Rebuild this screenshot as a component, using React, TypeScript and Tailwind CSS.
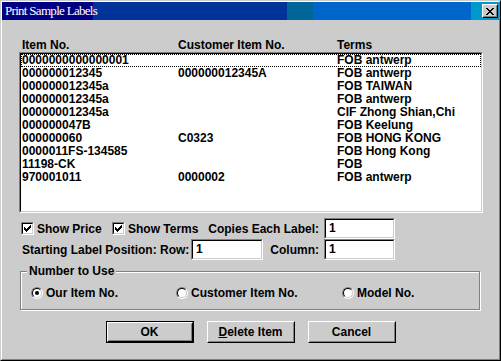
import React from "react";

const rows: [string, string, string][] = [
  ["0000000000000001", "", "FOB antwerp"],
  ["000000012345", "000000012345A", "FOB antwerp"],
  ["000000012345a", "", "FOB TAIWAN"],
  ["000000012345a", "", "FOB antwerp"],
  ["000000012345a", "", "CIF Zhong Shian,Chi"],
  ["000000047B", "", "FOB Keelung"],
  ["000000060", "C0323", "FOB HONG KONG"],
  ["0000011FS-134585", "", "FOB Hong Kong"],
  ["11198-CK", "", "FOB"],
  ["970001011", "0000002", "FOB antwerp"],
];

function PixelGlyph({ map, className }: { map: string[]; className?: string }) {
  const w = map[0].length;
  const h = map.length;
  const rects: React.ReactElement[] = [];
  map.forEach((row, y) =>
    row.split("").forEach((c, x) => {
      if (c === "X") rects.push(<rect key={`${x}-${y}`} x={x} y={y} width={1} height={1} />);
    })
  );
  return (
    <svg width={w} height={h} viewBox={`0 0 ${w} ${h}`} shapeRendering="crispEdges" className={className} fill="black">
      {rects}
    </svg>
  );
}

const closeMap = ["XX....XX", ".XX..XX.", "..XXXX..", "...XX...", "..XXXX..", ".XX..XX.", "XX....XX"];
const checkMap = ["......X", ".....XX", "X...XXX", "XX.XXX.", "XXXXX..", ".XXX...", "..X...."];

function Checkbox() {
  return (
    <div className="w-[13px] h-[13px] border border-t-[#808080] border-l-[#808080] border-r-white border-b-white">
      <div className="w-full h-full bg-white border border-t-black border-l-black border-r-[#cccccc] border-b-[#cccccc] flex items-center justify-center">
        <PixelGlyph map={checkMap} />
      </div>
    </div>
  );
}

function Radio({ checked }: { checked?: boolean }) {
  return (
    <div className="w-[12px] h-[12px] rounded-full border border-t-[#808080] border-l-[#808080] border-r-white border-b-white">
      <div className="w-full h-full rounded-full bg-white border border-t-black border-l-black border-r-[#cccccc] border-b-[#cccccc] flex items-center justify-center">
        {checked && <div className="w-[4px] h-[4px] rounded-full bg-black" />}
      </div>
    </div>
  );
}

function Input({ w, value }: { w: string; value: string }) {
  return (
    <div className={`${w} h-[21px] border border-t-[#808080] border-l-[#808080] border-r-white border-b-white`}>
      <div className="w-full h-full bg-white border border-t-black border-l-black border-r-[#cccccc] border-b-[#cccccc] pl-[3px] leading-[17px]">
        {value}
      </div>
    </div>
  );
}

function Button({ children, isDefault }: { children: React.ReactNode; isDefault?: boolean }) {
  const inner = (
    <div className="w-full h-full border border-t-white border-l-white border-r-black border-b-black">
      <div className="w-full h-full border border-t-[#cccccc] border-l-[#cccccc] border-r-[#808080] border-b-[#808080] flex items-center justify-center">
        {children}
      </div>
    </div>
  );
  return isDefault ? (
    <div className="w-[88px] h-[22px] border border-black">{inner}</div>
  ) : (
    <div className="w-[88px] h-[22px]">{inner}</div>
  );
}

export default function App() {
  return (
    <div className="w-[501px] h-[361px] bg-[#cccccc] border border-t-[#cccccc] border-l-[#cccccc] border-r-black border-b-black font-['Liberation_Sans',Arial,sans-serif] font-bold text-[12px] text-black">
      <div className="h-full border border-t-white border-l-white border-r-[#808080] border-b-[#808080] flex flex-col">
        {/* Title bar */}
        <div className="relative h-[18px] flex items-center">
          <div className="absolute inset-0 flex">
            <div className="w-[91px] h-full bg-[#000080]" />
            <div className="w-[194px] h-full bg-[#003399]" />
            <div className="w-[26px] h-full bg-[#006699]" />
            <div className="w-[158px] h-full bg-[#0066cc]" />
            <div className="flex-1 h-full bg-[#0099cc]" />
          </div>
          <div className="relative flex-1 pl-[3px] font-['Liberation_Serif','Times_New_Roman',serif] font-normal text-[13px] tracking-[-0.7px] leading-[18px] text-white">
            Print Sample Labels
          </div>
          <div className="relative mr-[1px] w-[16px] h-[14px] bg-[#cccccc] border border-t-white border-l-white border-r-black border-b-black">
            <div className="w-full h-full border border-t-[#cccccc] border-l-[#cccccc] border-r-[#808080] border-b-[#808080] flex items-center justify-center">
              <PixelGlyph map={closeMap} />
            </div>
          </div>
        </div>

        {/* Content */}
        <div className="pl-[17px] pt-[18px] flex flex-col">
          {/* List header */}
          <div className="h-[14px] leading-[14px] flex pl-[3px]">
            <div className="w-[156px]">Item No.</div>
            <div className="w-[159px]">Customer Item No.</div>
            <div>Terms</div>
          </div>
          {/* List box */}
          <div className="w-[464px] h-[161px] border border-t-[#808080] border-l-[#808080] border-r-white border-b-white">
            <div className="w-full h-full bg-white border border-t-black border-l-black border-r-[#cccccc] border-b-[#cccccc]">
              {rows.map((r, i) => (
                <div
                  key={i}
                  className={`h-[13px] leading-[13px] flex pl-[1px] whitespace-nowrap ${
                    i === 0 ? "outline outline-1 outline-dotted outline-black -outline-offset-1" : ""
                  }`}
                >
                  <div className="w-[156px]">{r[0]}</div>
                  <div className="w-[159px]">{r[1]}</div>
                  <div>{r[2]}</div>
                </div>
              ))}
            </div>
          </div>

          {/* Row 1 */}
          <div className="mt-[5px] w-[376px] h-[21px] flex items-center pl-[2px] whitespace-nowrap">
            <div className="w-[91px] flex items-center">
              <Checkbox />
              <span className="ml-[3px]">Show Price</span>
            </div>
            <div className="flex items-center">
              <Checkbox />
              <span className="ml-[3px]">Show Terms</span>
            </div>
            <div className="flex-1 text-right mr-[5px]">Copies Each Label:</div>
            <Input w="w-[71px]" value="1" />
          </div>

          {/* Row 2 */}
          <div className="w-[376px] h-[21px] flex items-center pl-[3px] whitespace-nowrap">
            <div className="w-[164px]">Starting Label Position: Row:</div>
            <div className="ml-[5px]">
              <Input w="w-[72px]" value="1" />
            </div>
            <div className="flex-1 text-right mr-[5px]">Column:</div>
            <Input w="w-[71px]" value="1" />
          </div>

          {/* Group box */}
          <div className="relative mt-[11px] ml-[1px] w-[460px] h-[39px] border border-[#808080] shadow-[inset_1px_1px_0_white,1px_1px_0_white]">
            <div className="absolute left-[6px] top-[-8px] px-[2px] bg-[#cccccc] leading-[14px]">Number to Use</div>
            <div className="h-full pt-[4px] pl-[10px] flex items-center whitespace-nowrap">
              <div className="w-[145px] flex items-center">
                <Radio checked />
                <span className="ml-[3px]">Our Item No.</span>
              </div>
              <div className="w-[166px] flex items-center">
                <Radio />
                <span className="ml-[3px]">Customer Item No.</span>
              </div>
              <div className="flex items-center">
                <Radio />
                <span className="ml-[3px]">Model No.</span>
              </div>
            </div>
          </div>
        </div>

        {/* Buttons */}
        <div className="mt-[11px] flex justify-center gap-[13px]">
          <Button isDefault>OK</Button>
          <Button>
            <span>
              <span className="underline">D</span>elete Item
            </span>
          </Button>
          <Button>Cancel</Button>
        </div>
      </div>
    </div>
  );
}
